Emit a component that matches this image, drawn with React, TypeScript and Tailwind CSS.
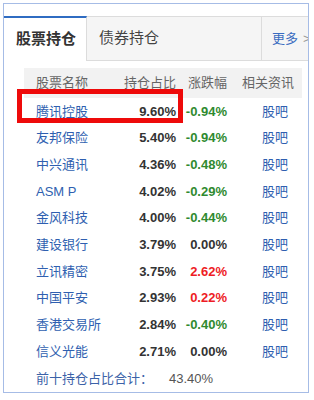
const holdings = [
  { name: '腾讯控股', ratio: '9.60%', change: '-0.94%' },
  { name: '友邦保险', ratio: '5.40%', change: '-0.94%' },
  { name: '中兴通讯', ratio: '4.36%', change: '-0.48%' },
  { name: 'ASM P', ratio: '4.02%', change: '-0.29%' },
  { name: '金风科技', ratio: '4.00%', change: '-0.44%' },
  { name: '建设银行', ratio: '3.79%', change: '0.00%' },
  { name: '立讯精密', ratio: '3.75%', change: '2.62%' },
  { name: '中国平安', ratio: '2.93%', change: '0.22%' },
  { name: '香港交易所', ratio: '2.84%', change: '-0.40%' },
  { name: '信义光能', ratio: '2.71%', change: '0.00%' },
];

function changeColor(change: string) {
  if (change.startsWith('-')) return 'text-[#2f8a2f]';
  if (change === '0.00%') return 'text-[#333333]';
  return 'text-[#ee1c25]';
}

export default function App() {
  return (
    <div className="h-[400px] w-[314px] bg-white pl-[3px] pt-[3px] font-['Liberation_Sans','Noto_Sans_CJK_SC',sans-serif]">
      <div className="relative h-[390px] w-[306px] overflow-hidden border border-[#a6bce6] pt-[12px]">
        {/* tabs */}
        <div className="flex h-[45px] border-y border-[#dcdcdc] bg-[#f5f5f5]">
          <div className="-mt-px -mb-px flex w-[83px] shrink-0 items-center border-t-2 border-r border-t-[#2f6cc2] border-r-[#dcdcdc] bg-white pl-[12px] text-[15px] font-bold text-[#333]">
            股票持仓
          </div>
          <div className="flex w-[175px] shrink-0 items-center border-r border-[#dcdcdc] pl-[12px] text-[15px] text-[#444]">
            债券持仓
          </div>
          <div className="flex shrink-0 items-center gap-[5px] whitespace-nowrap pl-[10px] text-[13px] text-[#3a6cc0]">
            更多
            <span className="text-[#999]">&gt;</span>
          </div>
        </div>

        {/* table */}
        <div className="ml-[20px] mr-[6px] mt-[7px] text-[13px]">
          <div className="flex h-[30px] items-center bg-[#f2f2f2] text-[#666]">
            <div className="w-[94px] pl-[12px]">股票名称</div>
            <div className="w-[58px] text-right">持仓占比</div>
            <div className="w-[51px] text-right">涨跌幅</div>
            <div className="pl-[15px]">相关资讯</div>
          </div>
          {holdings.map((h) => (
            <div key={h.name} className="flex h-[26.7px] items-center">
              <div className="w-[94px] pl-[12px] text-[#2f5fb0]">{h.name}</div>
              <div className="w-[58px] text-right font-bold text-[#333]">{h.ratio}</div>
              <div className={`w-[51px] text-right font-bold ${changeColor(h.change)}`}>{h.change}</div>
              <div className="pl-[35px] text-[#2f5fb0]">股吧</div>
            </div>
          ))}
          <div className="flex h-[27px] items-center pl-[12px] text-[#3c62a8]">
            <span>前十持仓占比合计：</span>
            <span className="ml-[16px] text-[#555]">43.40%</span>
          </div>
        </div>

        {/* annotation box */}
        <div className="absolute left-[13px] top-[85px] h-[34px] w-[166px] border-[5px] border-[#ee0a0a]" />
      </div>
    </div>
  );
}
